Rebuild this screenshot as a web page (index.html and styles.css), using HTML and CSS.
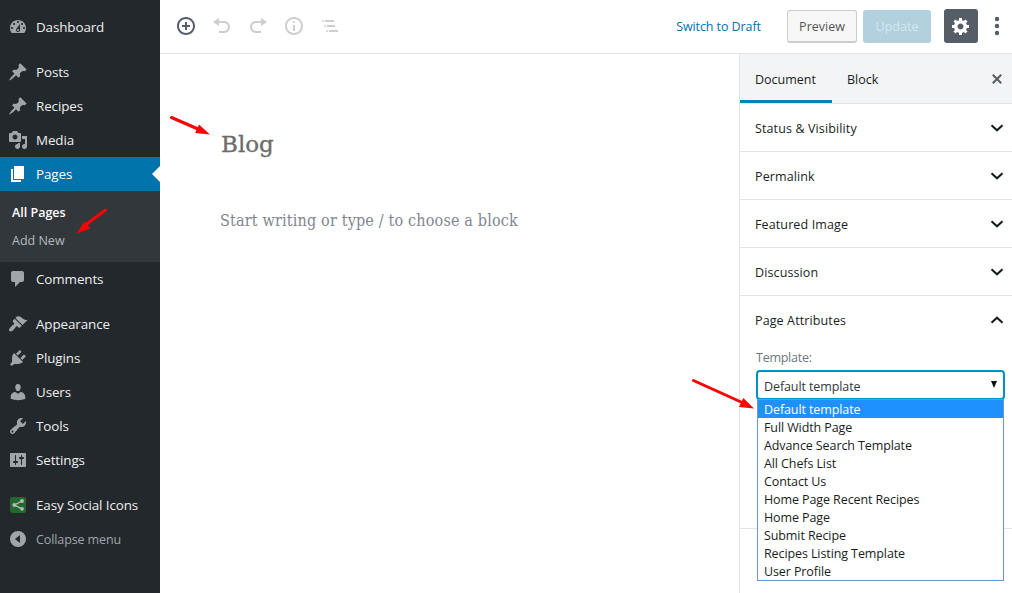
FILE: index.html
```html
<!DOCTYPE html>
<html lang="en">
<head>
<meta charset="utf-8">
<title>Edit Page</title>
<link rel="stylesheet" href="styles.css">
</head>
<body>
<div class="app">
  <nav class="menu">
    <a class="item"><svg viewBox="0 0 20 20"><path d="M3.76 16h12.48c1.1-1.37 1.76-3.11 1.76-5 0-4.42-3.58-8-8-8s-8 3.58-8 8c0 1.89.66 3.63 1.76 5zM10 4c.55 0 1 .45 1 1s-.45 1-1 1-1-.45-1-1 .45-1 1-1zM6 6c.55 0 1 .45 1 1s-.45 1-1 1-1-.45-1-1 .45-1 1-1zm8 0c.55 0 1 .45 1 1s-.45 1-1 1-1-.45-1-1 .45-1 1-1zm-5.37 5.55L12 7v6c0 1.1-.9 2-2 2s-2-.9-2-2c0-.57.24-1.08.63-1.45zM4 10c.55 0 1 .45 1 1s-.45 1-1 1-1-.45-1-1 .45-1 1-1zm12 0c.55 0 1 .45 1 1s-.45 1-1 1-1-.45-1-1 .45-1 1-1zm-5 3c0-.55-.45-1-1-1s-1 .45-1 1 .45 1 1 1 1-.45 1-1z"/></svg><span>Dashboard</span></a>
    <a class="item gap"><svg viewBox="0 0 20 20"><path d="M10.44 3.02l1.82-1.82 6.36 6.35-1.83 1.82c-1.05-.68-2.48-.57-3.41.36l-.75.75c-.92.93-1.04 2.35-.35 3.41l-1.83 1.82-2.41-2.41-2.8 2.79c-.42.42-3.38 2.71-3.8 2.29s1.86-3.39 2.28-3.81l2.79-2.79L4.1 9.36l1.83-1.82c1.05.69 2.48.57 3.4-.36l.75-.75c.93-.92 1.05-2.35.36-3.41z"/></svg><span>Posts</span></a>
    <a class="item"><svg viewBox="0 0 20 20"><path d="M10.44 3.02l1.82-1.82 6.36 6.35-1.83 1.82c-1.05-.68-2.48-.57-3.41.36l-.75.75c-.92.93-1.04 2.35-.35 3.41l-1.83 1.82-2.41-2.41-2.8 2.79c-.42.42-3.38 2.71-3.8 2.29s1.86-3.39 2.28-3.81l2.79-2.79L4.1 9.36l1.83-1.82c1.05.69 2.48.57 3.4-.36l.75-.75c.93-.92 1.05-2.35.36-3.41z"/></svg><span>Recipes</span></a>
    <a class="item"><svg viewBox="0 0 20 20"><path d="M13 11V4c0-.55-.45-1-1-1h-1.67L9 1H5L3.67 3H2c-.55 0-1 .45-1 1v7c0 .55.45 1 1 1h10c.55 0 1-.45 1-1zM7 4.5c1.38 0 2.5 1.12 2.5 2.5S8.38 9.5 7 9.5 4.5 8.38 4.5 7 5.62 4.5 7 4.5zM14 6h5v10.5c0 1.38-1.12 2.5-2.5 2.5S14 17.88 14 16.5s1.12-2.5 2.5-2.5c.17 0 .34.02.5.05V9h-3V6zm-4 8.05V13h2v3.5c0 1.38-1.12 2.5-2.5 2.5S7 17.88 7 16.5 8.12 14 9.5 14c.17 0 .34.02.5.05z"/></svg><span>Media</span></a>
    <a class="item current"><svg viewBox="0 0 20 20"><path d="M6 15V2h10v13H6zm-1 1h8v2H3V5h2v11z"/></svg><span>Pages</span></a>
    <div class="submenu"><a class="active">All Pages</a><a>Add New</a></div>
    <a class="item"><svg viewBox="0 0 20 20"><path d="M5 2h9c1.1 0 2 .9 2 2v7c0 1.1-.9 2-2 2h-2l-5 5v-5H5c-1.1 0-2-.9-2-2V4c0-1.1.9-2 2-2z"/></svg><span>Comments</span></a>
    <a class="item gap"><svg viewBox="0 0 20 20"><path d="M14.48 11.06L7.41 3.99l1.5-1.5c.5-.56 2.3-.47 3.51.32 1.21.8 1.43 1.28 2.91 2.1 1.18.64 2.45 1.26 4.45.85zm-.71.71L6.7 4.7 4.93 6.47c-.39.39-.39 1.02 0 1.41l1.06 1.06c.39.39.39 1.03 0 1.42-.6.6-1.43 1.11-2.21 1.69-.35.26-.7.53-1.01.84C1.43 14.23.4 16.08 1.4 17.07c.99 1 2.84-.03 4.18-1.36.31-.31.58-.66.85-1.02.57-.78 1.08-1.61 1.69-2.21.39-.39 1.02-.39 1.41 0l1.06 1.06c.39.39 1.02.39 1.41 0z"/></svg><span>Appearance</span></a>
    <a class="item"><svg viewBox="0 0 20 20"><path d="M13.11 4.36L9.87 7.6 8 5.73l3.24-3.24c.35-.34 1.05-.2 1.56.32.52.51.66 1.21.31 1.55zm-8 1.77l.91-1.12 9.01 9.01-1.19.84c-.71.71-2.63 1.16-3.82 1.16H6.14L4.9 17.26c-.59.59-1.54.59-2.12 0-.59-.58-.59-1.53 0-2.12l1.24-1.24v-3.88c0-1.13.4-3.19 1.09-3.89zm7.26 3.97l3.24-3.24c.34-.35 1.04-.21 1.55.31.52.51.66 1.21.31 1.55l-3.24 3.25z"/></svg><span>Plugins</span></a>
    <a class="item"><svg viewBox="0 0 20 20"><path d="M10 9.25c-2.27 0-2.73-3.44-2.73-3.44C7 4.02 7.82 2 9.97 2c2.16 0 2.98 2.02 2.71 3.81 0 0-.41 3.44-2.68 3.44zm0 2.57L12.72 10c2.39 0 4.52 2.33 4.52 4.53v2.49s-3.65 1.13-7.24 1.13c-3.65 0-7.24-1.13-7.24-1.13v-2.49c0-2.25 1.94-4.48 4.47-4.48z"/></svg><span>Users</span></a>
    <a class="item"><svg viewBox="0 0 20 20"><path d="M16.68 9.77c-1.34 1.34-3.3 1.67-4.95.99l-5.41 6.52c-.99.99-2.59.99-3.58 0s-.99-2.59 0-3.57l6.52-5.42c-.68-1.65-.35-3.61.99-4.95 1.28-1.28 3.12-1.62 4.72-1.06l-2.89 2.89 2.82 2.82 2.86-2.87c.53 1.58.18 3.39-1.08 4.65zM3.81 16.21c.4.39 1.04.39 1.43 0 .4-.4.4-1.04 0-1.43-.39-.4-1.03-.4-1.43 0-.39.39-.39 1.03 0 1.43z"/></svg><span>Tools</span></a>
    <a class="item"><svg viewBox="0 0 20 20"><path d="M18 16V4c0-.55-.45-1-1-1H3c-.55 0-1 .45-1 1v12c0 .55.45 1 1 1h14c.55 0 1-.45 1-1zM8 11h1c.55 0 1 .45 1 1s-.45 1-1 1H8v1.5c0 .28-.22.5-.5.5s-.5-.22-.5-.5V13H6c-.55 0-1-.45-1-1s.45-1 1-1h1V5.5c0-.28.22-.5.5-.5s.5.22.5.5V11zm5-2h-1c-.55 0-1-.45-1-1s.45-1 1-1h1V5.5c0-.28.22-.5.5-.5s.5.22.5.5V7h1c.55 0 1 .45 1 1s-.45 1-1 1h-1v5.500c0 .28-.22.5-.5.5s-.5-.22-.5-.5V9z"/></svg><span>Settings</span></a>
    <a class="item gap social"><svg viewBox="0 0 20 20"><rect class="tile" x="2" y="2" width="16" height="16" rx="2.5"/><path class="link" d="M14 6L6.5 10l7.500 3.800"/><circle cx="14" cy="6" r="1.900"/><circle cx="6.300" cy="10" r="1.900"/><circle cx="14" cy="13.800" r="1.900"/></svg><span>Easy Social Icons</span></a>
    <a class="item collapse"><svg viewBox="0 0 20 20"><path fill-rule="evenodd" d="M10 2a8 8 0 1 0 0 16 8 8 0 0 0 0-16zm2 4v8l-5-4z"/></svg><span>Collapse menu</span></a>
  </nav>

  <div class="editor">
    <header class="toolbar">
      <div class="tools">
        <svg class="on" viewBox="0 0 20 20"><path d="M10 1c-5 0-9 4-9 9s4 9 9 9 9-4 9-9-4-9-9-9zm0 16c-3.900 0-7-3.100-7-7s3.100-7 7-7 7 3.100 7 7-3.100 7-7 7zm1-11H9v3H6v2h3v3h2v-3h3V9h-3V6z"/></svg>
        <svg viewBox="0 0 20 20"><path d="M12 5H7V2L1 6l6 4V7h5c2.200 0 4 1.800 4 4s-1.800 4-4 4H7v2h5c3.300 0 6-2.700 6-6s-2.700-6-6-6z"/></svg>
        <svg viewBox="0 0 20 20"><path d="M8 5h5V2l6 4-6 4V7H8c-2.200 0-4 1.800-4 4s1.800 4 4 4h5v2H8c-3.300 0-6-2.700-6-6s2.700-6 6-6z"/></svg>
        <svg viewBox="0 0 20 20"><path d="M9 15h2V9H9v6zm1-10c-.5 0-1 .5-1 1s.5 1 1 1 1-.5 1-1-.5-1-1-1zm0-4c-5 0-9 4-9 9s4 9 9 9 9-4 9-9-4-9-9-9zm0 16c-3.900 0-7-3.100-7-7s3.100-7 7-7 7 3.100 7 7-3.100 7-7 7z"/></svg>
        <svg viewBox="0 0 20 20"><path d="M2.300 4h1.400v2H2.300zM5 4h9v2H5zM4.300 9h1.400v2H4.300zM7 9h8v2H7zM6.300 14h1.400v2H6.300zM9 14h9v2H9z"/></svg>
      </div>
      <div class="actions">
        <a class="draft">Switch to Draft</a>
        <button class="preview">Preview</button>
        <button class="update">Update</button>
        <button class="gear"><svg viewBox="0 0 20 20"><path d="M18 12h-2.180c-.17.7-.44 1.350-.81 1.930l1.540 1.540-2.100 2.100-1.540-1.540c-.58.36-1.230.63-1.910.79V19H8v-2.180c-.68-.16-1.330-.43-1.910-.79l-1.540 1.540-2.120-2.120 1.540-1.540c-.36-.58-.63-1.230-.79-1.910H1V9.030h2.170c.16-.7.44-1.350.8-1.940L2.430 5.550l2.100-2.100 1.540 1.540c.58-.37 1.240-.64 1.930-.81V2h3v2.180c.68.16 1.330.43 1.910.79l1.540-1.540 2.120 2.120-1.540 1.540c.36.59.64 1.240.8 1.940H18V12zm-8.500 1.500c1.660 0 3-1.340 3-3s-1.340-3-3-3-3 1.340-3 3 1.340 3 3 3z"/></svg></button>
        <svg class="dots" viewBox="0 0 6 20"><circle cx="3" cy="3" r="2.200"/><circle cx="3" cy="10" r="2.200"/><circle cx="3" cy="17" r="2.200"/></svg>
      </div>
    </header>
    <div class="body">
      <main class="canvas">
        <h1>Blog</h1>
        <p>Start writing or type / to choose a block</p>
      </main>
      <aside class="panel">
        <div class="tabs"><span class="tab selected">Document</span><span class="tab">Block</span><svg viewBox="0 0 20 20"><path d="M14.950 6.460L11.410 10l3.540 3.540-1.410 1.410L10 11.420l-3.530 3.530-1.420-1.420L8.580 10 5.050 6.470l1.420-1.420L10 8.580l3.540-3.530z"/></svg></div>
        <div class="row"><span>Status &amp; Visibility</span><svg viewBox="0 0 14 8"><path d="M1.500 1.300L7 6.300l5.500-5"/></svg></div>
        <div class="row"><span>Permalink</span><svg viewBox="0 0 14 8"><path d="M1.500 1.300L7 6.300l5.500-5"/></svg></div>
        <div class="row"><span>Featured Image</span><svg viewBox="0 0 14 8"><path d="M1.500 1.300L7 6.300l5.500-5"/></svg></div>
        <div class="row"><span>Discussion</span><svg viewBox="0 0 14 8"><path d="M1.500 1.300L7 6.300l5.500-5"/></svg></div>
        <section class="attributes">
          <div class="row open"><span>Page Attributes</span><svg viewBox="0 0 14 8"><path d="M1.500 6.700L7 1.700l5.500 5"/></svg></div>
          <div class="label">Template:</div>
          <div class="select"><span>Default template</span><svg viewBox="0 0 6 7"><path d="M0 0h6L3 7z"/></svg>
            <ul class="options">
              <li class="picked">Default template</li><li>Full Width Page</li><li>Advance Search Template</li><li>All Chefs List</li><li>Contact Us</li><li>Home Page Recent Recipes</li><li>Home Page</li><li>Submit Recipe</li><li>Recipes Listing Template</li><li>User Profile</li>
            </ul>
          </div>
        </section>
      </aside>
    </div>
  </div>
  <svg class="arrows" viewBox="0 0 1012 593">
    <path class="shaft" d="M171.500 117.500L198 129M105.500 210L86 224.500M693.500 380.500L741 402"/>
    <path d="M210 134.500l-14.800-1.500 3.800-8.500zM76.500 233.500l8-11.800 5.800 6.800zM754 408.500l-15-1.500 4.300-9z"/>
  </svg>
</div>
</body>
</html>
```
FILE: styles.css
```css
* { box-sizing: border-box; }
body { margin: 0; font-family: "Open Sans", "Noto Sans", sans-serif; font-size: 12.5px; color: #191e23; background: #fff; }
.app { position: relative; display: flex; width: 1012px; height: 593px; overflow: hidden; }
svg { display: block; flex: none; }

.menu { width: 160px; flex: none; padding-top: 10px; background: #23282d; color: #eee; }
.item { position: relative; display: flex; align-items: center; height: 34px; padding-left: 8px; gap: 8px; font-size: 13.4px; letter-spacing: -0.1px; white-space: nowrap; }
.item svg { width: 20px; height: 20px; fill: #a0a5aa; }
.gap { margin-top: 11px; }
.current { background: #0073aa; color: #fff; }
.current svg { fill: #fff; }
.current::after { content: ""; position: absolute; right: 0; top: 9px; border: 8px solid transparent; border-left: 0; border-right-color: #fff; }
.submenu { height: 71px; padding: 8px 12px 6px; background: #32373c; font-size: 12.5px; }
.submenu a { display: block; height: 28px; line-height: 28px; color: #b4b9be; }
.submenu .active { color: #fff; font-weight: 600; }
.collapse { color: #a0a5aa; font-size: 12.5px; }
.social .tile { fill: #23682f; }
.social .link { fill: none; stroke: #b5bbb6; stroke-width: 1.4; }
.social circle { fill: #b5bbb6; }

.editor { flex: 1; display: flex; flex-direction: column; min-width: 0; }
.toolbar { height: 54px; flex: none; display: flex; align-items: center; justify-content: space-between; padding: 0 12px 1px 16px; border-bottom: 1px solid #e2e4e7; }
.tools { display: flex; gap: 16px; }
.tools svg { width: 20px; height: 20px; fill: #ccced1; }
.tools .on { fill: #555d66; }
.actions { display: flex; align-items: center; }
.draft { color: #0073aa; margin-right: 26px; letter-spacing: -0.08px; }
button { display: flex; align-items: center; justify-content: center; margin: 0; padding: 0; font: inherit; border-radius: 3px; height: 33px; }
.preview { width: 70px; padding-top: 2px; border: 1px solid #ccc; border-bottom-width: 2px; background: #f7f7f7; color: #555; margin-right: 6px; }
.update { width: 68px; border: 0; background: #b2d0dd; color: #d5e8f0; margin-right: 13px; }
.gear { width: 34px; height: 34px; border: 0; background: #555d66; margin-right: 16px; }
.gear svg { width: 20px; height: 20px; fill: #fff; }
.dots { width: 6px; height: 20px; fill: #555d66; }

.body { flex: 1; display: flex; min-height: 0; }
.canvas { flex: 1; padding: 73px 60px 0; }
.canvas h1 { margin: 0; padding-left: 1px; font: 400 23px/34px "DejaVu Serif", serif; color: #6d6d68; -webkit-text-stroke: 0.35px #6d6d68; }
.canvas p { margin: 46px 0 0; font: 16px/28px "DejaVu Serif Condensed", "DejaVu Serif", serif; font-stretch: condensed; letter-spacing: 0.17px; color: #818691; white-space: nowrap; }

.panel { width: 273px; border-left: 1px solid #e2e4e7; }
.tabs { display: flex; height: 50px; background: #f3f4f5; border-bottom: 1px solid #e2e4e7; }
.tab { padding: 0 15px; line-height: 51px; }
.selected { width: 92px; height: 49px; font-weight: 500; border-bottom: 3px solid #0085ba; }
.tabs svg { width: 20px; height: 20px; margin: 15px 5px 0 auto; fill: #555d66; }
.row { display: flex; align-items: center; justify-content: space-between; height: 48px; padding: 1px 8px 0 15px; font-weight: 500; letter-spacing: 0.12px; border-bottom: 1px solid #e2e4e7; }
.row svg { width: 14px; height: 8px; fill: none; stroke: #191e23; stroke-width: 2.1; }
.open { border-bottom: 0; padding-top: 0; }
.attributes { height: 233px; border-bottom: 1px solid #e2e4e7; }
.label { height: 26px; padding-left: 16px; line-height: 27px; color: #6c7781; letter-spacing: -0.25px; }
.select { position: relative; display: flex; align-items: center; justify-content: space-between; width: 249px; height: 30px; margin-left: 16px; padding: 2px 6px 0; border: 2px solid #0093c2; border-radius: 4px; color: #32373c; letter-spacing: -0.1px; }
.select svg { width: 6px; height: 7px; margin: 0 0 4px; fill: #111; }
.options { position: absolute; z-index: 1; left: -1px; top: 27px; width: 247px; height: 182px; margin: 0; padding: 0; list-style: none; border: 1px solid #6f94d0; background: #fff; color: #191e23; }
.options li { height: 18px; line-height: 19px; padding-left: 6px; white-space: nowrap; }
.options .picked { background: #1e90ff; color: #fff; }

.arrows { position: absolute; z-index: 2; left: 0; top: 0; width: 1012px; height: 593px; pointer-events: none; fill: #f00; }
.arrows .shaft { fill: none; stroke: #f00; stroke-width: 3; stroke-linecap: round; }
```
